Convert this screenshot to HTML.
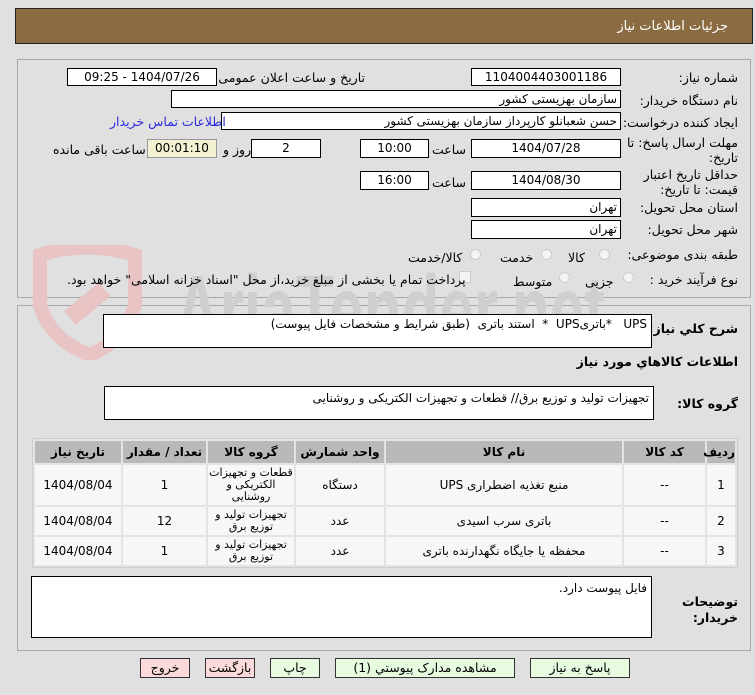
<!DOCTYPE html>
<html><head><meta charset="utf-8"><style>
*{box-sizing:border-box;margin:0;padding:0}
body{width:755px;height:695px;background:#e0e0e0;font-family:Tahoma,"DejaVu Sans","Liberation Sans",sans-serif;font-size:12px;color:#000;position:relative;overflow:hidden}
.a{position:absolute}
.hdr{left:15px;top:8px;width:738px;height:36px;background:#8b6b41;border:1px solid #222}
.hdr span{position:absolute;right:24px;top:10px;color:#fff;font-size:13px}
.panel{border:1px solid #a8a8a8}
.in{position:absolute;background:#fff;border:1px solid #000;height:18px;font-size:12px;line-height:16px;padding:0 3px;direction:rtl;white-space:nowrap}
.c{text-align:center}
.lb{position:absolute;direction:rtl;white-space:nowrap;font-size:12.5px}
.rad{position:absolute;width:11px;height:11px;border-radius:50%;border:1px solid #ccc;background:#f4f4f4}
table{border-collapse:separate;border-spacing:2px;background:#e4e4e4;border:1px solid #ccc;table-layout:fixed}
th{background:#b9b9b9;font-weight:bold;height:22px;font-size:12px}
td{background:#f7f7f7;text-align:center;font-size:12px;line-height:13px;overflow:hidden}
.btn{position:absolute;top:658px;height:20px;border:1px solid #333;font-size:12.5px;text-align:center;line-height:18px;direction:rtl}
.g{background:#e6fbe0}.r{background:#fadada}
.ta{position:absolute;background:#fff;border:1px solid #000;direction:rtl;padding:2px 4px;font-size:12px}
</style></head><body>
<div class="a hdr"><span>جزئیات اطلاعات نیاز</span></div>
<div class="a panel" style="left:17px;top:59px;width:734px;height:239px"></div>
<div class="a panel" style="left:17px;top:305px;width:734px;height:346px"></div>

<svg class="a" style="left:15px;top:245px" width="600" height="115" viewBox="0 0 600 115">
<path d="M25 10 Q70 -5 120 10 L120 60 Q110 95 75 110 Q35 95 25 60 Z" fill="none" stroke="#e8c4c4" stroke-width="14"/>
<rect x="50" y="50" width="45" height="18" fill="#e8c4c4" transform="rotate(-40 72 59)"/>
<text x="160" y="100" font-family="Liberation Sans,sans-serif" font-weight="bold" font-size="100" fill="#cfcfcf" textLength="430" lengthAdjust="spacingAndGlyphs">AriaTender.net</text>
</svg>

<div class="lb" style="right:17px;top:70px">شماره نیاز:</div>
<div class="in c" style="left:471px;top:68px;width:150px">1104004403001186</div>
<div class="lb" style="right:390px;top:70px">تاریخ و ساعت اعلان عمومی:</div>
<div class="in c" style="left:67px;top:68px;width:150px">1404/07/26 - 09:25</div>

<div class="lb" style="right:17px;top:93px">نام دستگاه خریدار:</div>
<div class="in" style="left:171px;top:90px;width:450px">سازمان بهزیستی کشور</div>

<div class="lb" style="right:17px;top:115px">ایجاد کننده درخواست:</div>
<div class="in" style="left:221px;top:112px;width:400px">حسن  شعبانلو کارپرداز سازمان بهزیستی کشور</div>
<div class="lb" style="left:110px;top:114px;color:#2a2ae0">اطلاعات تماس خریدار</div>

<div class="lb" style="right:17px;top:135px;text-align:right;line-height:15px">مهلت ارسال پاسخ: تا<br>تاریخ:</div>
<div class="in c" style="left:471px;top:139px;width:150px;height:19px">1404/07/28</div>
<div class="lb" style="left:432px;top:142px">ساعت</div>
<div class="in c" style="left:360px;top:139px;width:69px;height:19px">10:00</div>
<div class="in c" style="left:251px;top:139px;width:70px;height:19px">2</div>
<div class="lb" style="left:223px;top:142px">روز و</div>
<div class="in c" style="left:147px;top:139px;width:70px;height:19px;background:#f2f2d2;border-color:#999">00:01:10</div>
<div class="lb" style="left:53px;top:142px">ساعت باقی مانده</div>

<div class="lb" style="right:17px;top:167px;text-align:right;line-height:15px">حداقل تاریخ اعتبار<br>قیمت: تا تاریخ:</div>
<div class="in c" style="left:471px;top:171px;width:150px;height:19px">1404/08/30</div>
<div class="lb" style="left:432px;top:175px">ساعت</div>
<div class="in c" style="left:360px;top:171px;width:69px;height:19px">16:00</div>

<div class="lb" style="right:17px;top:200px">استان محل تحویل:</div>
<div class="in" style="left:471px;top:198px;width:150px;height:19px">تهران</div>
<div class="lb" style="right:17px;top:222px">شهر محل تحویل:</div>
<div class="in" style="left:471px;top:220px;width:150px;height:19px">تهران</div>

<div class="lb" style="right:17px;top:247px">طبقه بندی موضوعی:</div>
<div class="rad" style="left:599px;top:249px"></div><div class="lb" style="left:568px;top:250px">کالا</div>
<div class="rad" style="left:541px;top:249px"></div><div class="lb" style="left:500px;top:250px">خدمت</div>
<div class="rad" style="left:470px;top:249px"></div><div class="lb" style="left:408px;top:250px">کالا/خدمت</div>

<div class="lb" style="right:17px;top:272px">نوع فرآیند خرید :</div>
<div class="rad" style="left:623px;top:272px"></div><div class="lb" style="left:585px;top:274px">جزیی</div>
<div class="rad" style="left:559px;top:272px"></div><div class="lb" style="left:513px;top:274px">متوسط</div>
<div class="a" style="left:459px;top:271px;width:12px;height:12px;border:1px solid #ccc;background:#f4f4f4"></div>
<div class="lb" style="left:67px;top:272px">پرداخت تمام یا بخشی از مبلغ خرید،از محل "اسناد خزانه اسلامی" خواهد بود.</div>

<div class="lb" style="right:17px;top:321px;font-weight:bold">شرح کلي نیاز:</div>
<div class="ta" style="left:103px;top:314px;width:549px;height:34px">UPS &nbsp; *باتریUPS &nbsp;* &nbsp;استند باتری &nbsp;(طبق شرایط و مشخصات فایل پیوست)</div>
<div class="lb" style="right:17px;top:354px;font-weight:bold">اطلاعات کالاهاي مورد نیاز</div>
<div class="lb" style="right:17px;top:396px;font-weight:bold">گروه کالا:</div>
<div class="ta" style="left:104px;top:386px;width:550px;height:34px;padding-top:4px">تجهیزات تولید و توزیع برق// قطعات و تجهیزات الکتریکی و روشنایی</div>

<table class="a" style="left:32px;top:438px;width:706px;direction:rtl">
<tr><th style="width:28px">ردیف</th><th style="width:81px">کد کالا</th><th style="width:236px">نام کالا</th><th style="width:88px">واحد شمارش</th><th style="width:86px">گروه کالا</th><th style="width:83px">تعداد / مقدار</th><th>تاریخ نیاز</th></tr>
<tr><td style="height:40px">1</td><td>--</td><td>منبع تغذیه اضطراری UPS</td><td>دستگاه</td><td style="font-size:11px;line-height:12px">قطعات و تجهیزات الکتریکی و روشنایی</td><td>1</td><td>1404/08/04</td></tr>
<tr><td style="height:28px">2</td><td>--</td><td>باتری سرب اسیدی</td><td>عدد</td><td style="font-size:11px;line-height:12px">تجهیزات تولید و توزیع برق</td><td>12</td><td>1404/08/04</td></tr>
<tr><td style="height:28px">3</td><td>--</td><td>محفظه یا جایگاه نگهدارنده باتری</td><td>عدد</td><td style="font-size:11px;line-height:12px">تجهیزات تولید و توزیع برق</td><td>1</td><td>1404/08/04</td></tr>
</table>

<div class="lb" style="right:17px;top:594px;font-weight:bold;text-align:right;line-height:16px">توضیحات<br>خریدار:</div>
<div class="ta" style="left:31px;top:576px;width:621px;height:62px;padding-top:4px">فایل پیوست دارد.</div>

<div class="btn g" style="left:530px;width:100px">پاسخ به نیاز</div>
<div class="btn g" style="left:335px;width:180px">مشاهده مدارک پیوستي (1)</div>
<div class="btn g" style="left:270px;width:50px">چاپ</div>
<div class="btn r" style="left:205px;width:50px">بازگشت</div>
<div class="btn r" style="left:140px;width:50px">خروج</div>
</body></html>
